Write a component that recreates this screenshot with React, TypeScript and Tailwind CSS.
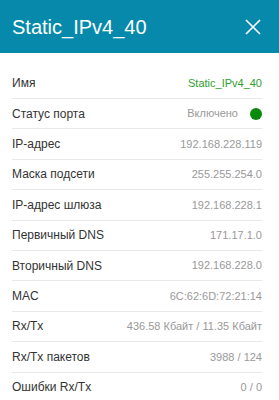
import React from "react";

const rows: { label: string; value: string; kind?: "green" | "status" }[] = [
  { label: "Имя", value: "Static_IPv4_40", kind: "green" },
  { label: "Статус порта", value: "Включено", kind: "status" },
  { label: "IP-адрес", value: "192.168.228.119" },
  { label: "Маска подсети", value: "255.255.254.0" },
  { label: "IP-адрес шлюза", value: "192.168.228.1" },
  { label: "Первичный DNS", value: "171.17.1.0" },
  { label: "Вторичный DNS", value: "192.168.228.0" },
  { label: "MAC", value: "6C:62:6D:72:21:14" },
  { label: "Rx/Tx", value: "436.58 Кбайт / 11.35 Кбайт" },
  { label: "Rx/Tx пакетов", value: "3988 / 124" },
  { label: "Ошибки Rx/Tx", value: "0 / 0" },
];

export default function App() {
  return (
    <div
      className="w-[279px] h-[400px] overflow-hidden bg-white"
      style={{ fontFamily: '"Liberation Sans", Arial, sans-serif' }}
    >
      <div className="h-[53px] bg-[#0689ab] flex items-center pl-3 pr-[17px] justify-between">
        <span className="text-white text-[20px] leading-none">Static_IPv4_40</span>
        <svg width="16" height="16" viewBox="0 0 16 16" className="mr-[1px]">
          <path d="M1 1 L15 15 M15 1 L1 15" stroke="white" strokeWidth="1.6" fill="none" />
        </svg>
      </div>
      <div className="pt-[15.6px] pl-3 pr-[17px]">
        {rows.map((r) => (
          <div
            key={r.label}
            className="h-[30.4px] flex items-center justify-between border-b border-[#e8e8e8]"
          >
            <span className="text-[12px] text-[#333333]">{r.label}</span>
            {r.kind === "status" ? (
              <span className="flex items-center">
                <span className="text-[11px] text-[#999999]">{r.value}</span>
                <span className="ml-3 w-3 h-3 rounded-full bg-[#0a8a0a]" />
              </span>
            ) : (
              <span
                className={
                  r.kind === "green"
                    ? "text-[11px] text-[#2f9e2f]"
                    : "text-[11px] text-[#999999]"
                }
              >
                {r.value}
              </span>
            )}
          </div>
        ))}
      </div>
    </div>
  );
}
